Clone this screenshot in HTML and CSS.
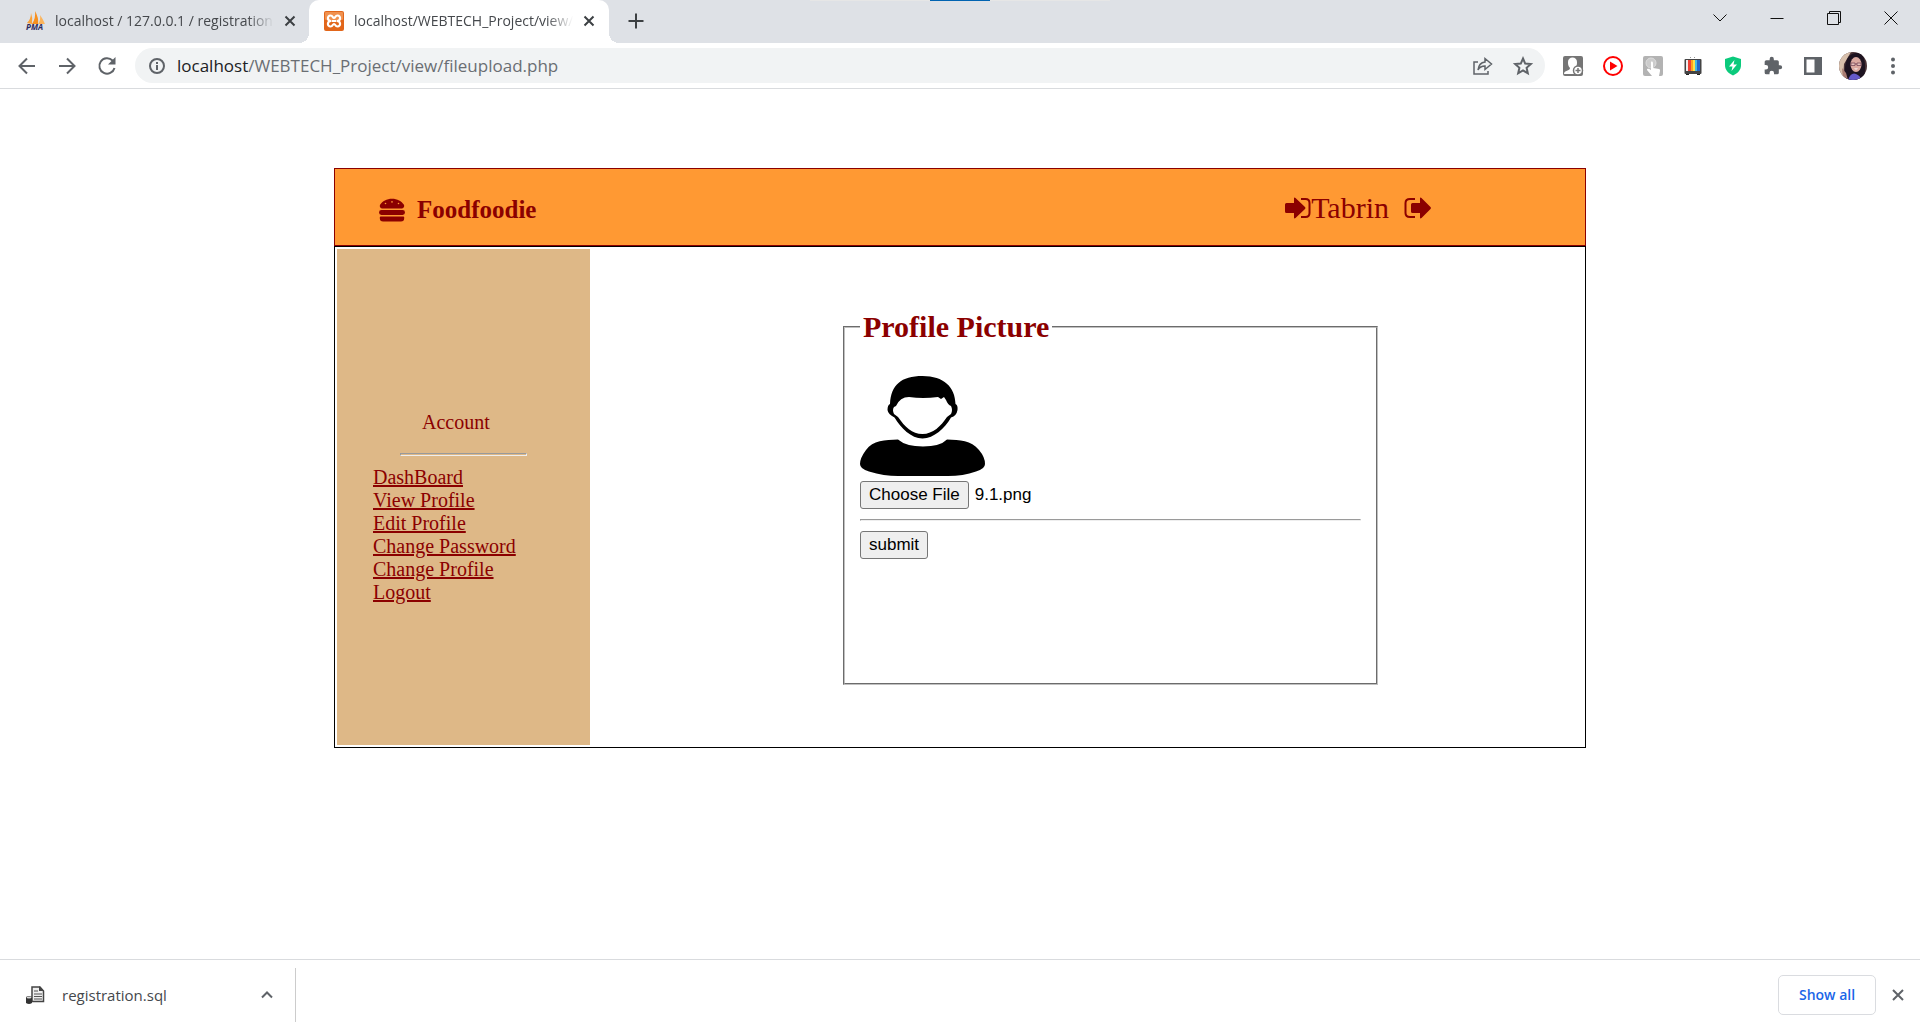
FILE: index.html
```html
<!DOCTYPE html>
<html lang="en">
<head>
<meta charset="utf-8">
<title>Foodfoodie - Profile Picture</title>
<link rel="stylesheet" href="styles.css">
</head>
<body>
<div class="tabstrip">
  <div class="progress"><span class="progress-bar"></span></div>
  <div class="tab">
    <svg class="i20" viewBox="0 0 20 20"><path d="M2 12Q6 8 6 2Q8 7 7 13Z" fill="#f9a13a"/><path d="M7 13Q11 7 10 0Q14 7 13 13Z" fill="#f78f1e"/><path d="M13 13Q16 9 15 4Q18 8 20 13Z" fill="#fbb45c"/><text x="1" y="19" class="pma">PMA</text></svg>
    <span class="tab-title">localhost / 127.0.0.1 / registration</span>
    <button class="icon-btn tab-close" aria-label="Close tab"><svg width="12" height="12" viewBox="0 0 12 12"><path d="M1.500 1.500l9 9M10.500 1.500l-9 9" class="dark"/></svg></button>
  </div>
  <div class="tab tab-active">
    <svg class="i20" viewBox="0 0 20 20"><rect width="20" height="20" rx="2" fill="#e2661a"/><rect x="1" y="1" width="18" height="8" rx="1" fill="#f0914f"/><path d="M7.500 10H12.500M7 10C3 10 3 4.500 6.500 4.500C9 4.500 8.500 7 10 7S11 4.500 13.500 4.500C17 4.500 17 10 13 10C17 10 17 15.500 13.500 15.500C11 15.500 11.500 13 10 13S9 15.500 6.500 15.500C3 15.500 3 10 7 10" fill="none" stroke="#fff" stroke-width="2.200"/></svg>
    <span class="tab-title">localhost/WEBTECH_Project/view/</span>
    <button class="icon-btn tab-close" aria-label="Close tab"><svg width="12" height="12" viewBox="0 0 12 12"><path d="M1.500 1.500l9 9M10.500 1.500l-9 9" class="dark"/></svg></button>
  </div>
  <button class="icon-btn new-tab" aria-label="New tab"><svg width="16" height="16" viewBox="0 0 16 16"><path d="M8 0.500v15M0.500 8h15" class="dark"/></svg></button>
  <div class="window-controls">
    <button class="icon-btn" aria-label="Search tabs"><svg width="14" height="14" viewBox="0 0 14 14"><path d="M0.500 3.500L7 10L13.500 3.500" class="thin"/></svg></button>
    <button class="icon-btn" aria-label="Minimize"><svg width="14" height="14" viewBox="0 0 14 14"><path d="M0.500 7.500h13" class="thin"/></svg></button>
    <button class="icon-btn" aria-label="Restore"><svg width="14" height="14" viewBox="0 0 14 14"><path d="M.5 2.500h11v11h-11zM2.500 2.500v-2h11v11h-2" class="thin"/></svg></button>
    <button class="icon-btn" aria-label="Close"><svg width="14" height="14" viewBox="0 0 14 14"><path d="M.5.500l13 13M13.500.500l-13 13" class="thin"/></svg></button>
  </div>
</div>

<div class="toolbar">
  <div class="nav-buttons">
    <button class="icon-btn" aria-label="Back"><svg width="18" height="18" viewBox="0 0 18 18"><path d="M17 9H2M9 1.500L1.500 9L9 16.500" class="gray"/></svg></button>
    <button class="icon-btn" aria-label="Forward"><svg width="18" height="18" viewBox="0 0 18 18"><path d="M1 9h15M9 1.500L16.500 9L9 16.500" class="gray"/></svg></button>
    <button class="icon-btn" aria-label="Reload"><svg width="18" height="18" viewBox="0 0 18 18"><path d="M16.500 11A7.700 7.700 0 1 1 14.500 3.500L16 5" class="gray"/><path d="M17.500 0v7.500H10z" fill="#5f6368"/></svg></button>
  </div>
  <div class="omnibox">
    <svg width="16" height="16" viewBox="0 0 16 16"><circle cx="8" cy="8" r="7" class="gray"/><path d="M8 7v5M8 4v2" class="gray"/></svg>
    <span class="url"><span class="host">localhost</span>/WEBTECH_Project/view/fileupload.php</span>
    <button class="icon-btn" aria-label="Share"><svg width="20" height="18" viewBox="0 0 20 18"><path d="M5 5H1v12h14v-3" class="line"/><path d="M12 5V1.500l6.500 5.500L12 12.500V9C9 9 6.500 10 5 13C5.500 8.500 8 5.500 12 5z" class="line"/></svg></button>
    <button class="icon-btn" aria-label="Bookmark"><svg width="18" height="18" viewBox="0 0 18 18"><path d="M9 1.500l2.200 5.100 5.600.500-4.200 3.700 1.200 5.500L9 13.400l-4.800 2.900 1.200-5.500L1.200 7.100l5.600-.5z" class="gray"/></svg></button>
  </div>
  <div class="extensions">
    <button class="icon-btn" aria-label="Account extension"><svg class="i20" viewBox="0 0 20 20"><rect width="20" height="20" rx="2" fill="#757575"/><path d="M1 18c0-4 6-3 6-6C5 10 5 8 5 6c0-3 2-4.500 4.500-4.500S14 3 14 6c0 2 0 4-2 6l1 6z" fill="#fff"/><circle cx="15" cy="14.500" r="4.500" fill="#fff" stroke="#757575" stroke-width="1.500"/><path d="M15 12v5M12.500 14.500h5" stroke="#757575" stroke-width="1.500"/></svg></button>
    <button class="icon-btn" aria-label="Video extension"><svg class="i20" viewBox="0 0 20 20"><circle cx="10" cy="10" r="9" fill="#fff" stroke="#f00" stroke-width="2"/><path d="M7 5.500l7.500 4.500L7 14.500z" fill="#f00"/></svg></button>
    <button class="icon-btn" aria-label="Touch extension"><svg class="i20" viewBox="0 0 20 20"><rect width="20" height="20" rx="2" fill="#b3b3b3"/><circle cx="8" cy="7" r="5" fill="#ccc" stroke="#ddd"/><path d="M8 6c1-1 2 0 2 1v5l6 1c1 0 1 1 1 2l-1 5H9L4 14c0-2 2-1 4 0z" fill="#fff"/></svg></button>
    <button class="icon-btn" aria-label="TV extension"><svg class="i20" viewBox="0 0 20 20"><path d="M7 1l1 1M12 1l-1 1" stroke="#999"/><rect x="1.500" y="3" width="17" height="15" rx="1" fill="#444"/><path d="M3 18h3v1H3zM14 18h3v1h-3z" fill="#222"/><path d="M3 4h3v11H3z" fill="#eee"/><path d="M5 4h3v11H5z" fill="#ef4136"/><path d="M8 4h3v11H8z" fill="#ffa41c"/><path d="M10 4h2v11h-2z" fill="#ffe14a"/><path d="M12 4h2v11h-2z" fill="#47b8e0"/><path d="M14 4h3v11h-3z" fill="#2565c7"/></svg></button>
    <button class="icon-btn" aria-label="Shield extension"><svg class="i20" viewBox="0 0 20 20"><path d="M10 .5l8 2.500v6c0 5-3 8-8 10.500C5 17 2 14 2 9V3z" fill="#0bca7c"/><path d="M11.500 4L6 10.500h3.500L8.500 15 14 8.500h-3.500z" fill="#fff"/></svg></button>
    <button class="icon-btn" aria-label="Extensions"><svg class="i20" viewBox="0 0 24 24"><path d="M20.500 11H19V7a2 2 0 0 0-2-2h-4V3.500a2.500 2.500 0 0 0-5 0V5H4a2 2 0 0 0-2 2v3.800h1.500a2.700 2.700 0 0 1 0 5.400H2V20a2 2 0 0 0 2 2h3.800v-1.500a2.700 2.700 0 0 1 5.400 0V22H17a2 2 0 0 0 2-2v-4h1.500a2.500 2.500 0 0 0 0-5z" fill="#5f6368"/></svg></button>
    <button class="icon-btn" aria-label="Side panel"><svg class="i20" viewBox="0 0 20 20"><path d="M1 1h18v18H1zM3.500 3.500v13h8v-13z" fill="#5f6368" fill-rule="evenodd"/></svg></button>
    <button class="icon-btn" aria-label="Profile"><svg width="28" height="28" viewBox="0 0 28 28"><defs><clipPath id="round"><circle cx="14" cy="14" r="14"/></clipPath></defs><g clip-path="url(#round)"><rect width="28" height="28" fill="#4a3336"/><path d="M0 0h12L5 12 4 28H0z" fill="#d8c0ac"/><path d="M6 28C5 12 7 2 17 1s10 12 8 27z" fill="#1d1320"/><ellipse cx="17" cy="12.500" rx="5.500" ry="7.500" fill="#dba9a0"/><path d="M12 11h4v2.500h-4zM18 11h4v2.500h-4zM16 12h2" fill="#e4c1ba" stroke="#784a5c" stroke-width=".8"/><path d="M15 16.500h4q-2 2-4 0" fill="#fff"/><path d="M9 28q3-8 8-6t5 6z" fill="#6559c9"/><path d="M3 16l4 5 2 7H4z" fill="#a97c72"/></g></svg></button>
    <button class="icon-btn" aria-label="Menu"><svg class="i20" viewBox="0 0 20 20" fill="#5f6368"><circle cx="10" cy="3.500" r="2"/><circle cx="10" cy="10" r="2"/><circle cx="10" cy="16.500" r="2"/></svg></button>
  </div>
</div>

<main class="page">
  <header class="site-header">
    <div class="brand">
      <svg width="26" height="26" viewBox="0 0 512 512" fill="currentColor"><path d="M464 256H48a48 48 0 0 0 0 96h416a48 48 0 0 0 0-96zm16 128H32a16 16 0 0 0-16 16v16a64 64 0 0 0 64 64h352a64 64 0 0 0 64-64v-16a16 16 0 0 0-16-16zM58.640 224h394.720c34.570 0 54.620-43.900 34.820-75.880C448 83.200 359.550 32.100 256 32c-103.540.1-192 51.200-232.180 116.110C4 180.090 24.070 224 58.640 224zM384 112a16 16 0 1 1-16 16 16 16 0 0 1 16-16zM256 80a16 16 0 1 1-16 16 16 16 0 0 1 16-16zm-128 32a16 16 0 1 1-16 16 16 16 0 0 1 16-16z"/></svg>
      <span>Foodfoodie</span>
    </div>
    <div class="user">
      <svg width="26" height="30" viewBox="0 0 26 30"><path d="M1.500 10H9V5.500q0-1.500 1.500-.5L20 14q1 1 0 2l-9.500 9Q9 26 9 24.500V20H1.500Q0 20 0 18.500v-7Q0 10 1.500 10z" fill="currentColor"/><path d="M16 6h4.500q4 0 4 4v10q0 4-4 4H16" fill="none" stroke="currentColor" stroke-width="2"/></svg><span>Tabrin</span>
      <svg class="sign-out" width="27" height="30" viewBox="0 0 27 30"><path d="M8.500 10H16V5.500q0-1.500 1.500-.5L26.500 14q1 1 0 2l-9 9Q16 26 16 24.500V20H8.500Q7 20 7 18.500v-7Q7 10 8.500 10z" fill="currentColor"/><path d="M11 6H6Q1.500 6 1.500 10v10q0 4 4.500 4h5" fill="none" stroke="currentColor" stroke-width="2"/></svg>
    </div>
  </header>
  <div class="panel">
    <aside class="sidebar">
      <p class="account">Account</p>
      <hr>
      <nav class="links">
        <a href="#">DashBoard</a>
        <a href="#">View Profile</a>
        <a href="#">Edit Profile</a>
        <a href="#">Change Password</a>
        <a href="#">Change Profile</a>
        <a href="#">Logout</a>
      </nav>
    </aside>
    <section class="content">
      <form class="form">
        <fieldset>
          <legend>Profile Picture</legend>
          <svg class="portrait" width="125" height="100" viewBox="0 0 125 100"><path d="M38 63.500C25 64 13 64 6 74Q0 82 0 88Q0 93 9 95.500Q24 100 38 100H88Q103 100 116 95.500Q125 93 125 88Q125 81 119 74C111 64 100 64 87 63.500Q80 70.500 63 70.500T38 63.500z"/><path d="M30 28C31 9 41 0 62.500 0S95 11 95.500 28Q98 29 97.500 34Q96.500 40 91 41.500C85 52 74 62.500 62.500 62.500S41 52 34.500 41.500Q28 38 27.500 34Q27.500 29 30 28z"/><path d="M36 30Q40 21 49 21Q63 23 78 21L81 23L84 21L86 24Q88 29 91 30Q93 34 91 38L87 41C81 50 73 58 62.500 58S45 51 38 41L34 38Q32 34 34 31z" fill="#fff"/></svg>
          <div class="file-row">
            <label class="btn" for="picture">Choose File<input class="file-input" type="file" id="picture"></label>
            <output for="picture">9.1.png</output>
          </div>
          <hr>
          <button class="btn" type="button">submit</button>
        </fieldset>
      </form>
    </section>
  </div>
</main>

<footer class="shelf">
  <div class="download">
    <svg width="18" height="18" viewBox="0 0 18 18"><path d="M6 1h8l3.500 4v10.500H6z" fill="#eee" stroke="#444" stroke-width="1.500"/><path d="M13 0v5h5z" fill="#444"/><path d="M8 5h4M8 8h8M8 10.500h8M8 13h8" stroke="#555"/><path d="M0 11q3-2 6 0v6q-3 2-6 0z" fill="#333"/><ellipse cx="3" cy="11.500" rx="2.500" ry="1" fill="#ddd"/></svg>
    <span class="filename">registration.sql</span>
    <button class="icon-btn" aria-label="Download options"><svg width="12" height="12" viewBox="0 0 12 12"><path d="M1 8.500l5-5 5 5" class="gray"/></svg></button>
  </div>
  <button class="show-all">Show all</button>
  <button class="icon-btn" aria-label="Close downloads"><svg width="12" height="12" viewBox="0 0 12 12"><path d="M1 1l10 10M11 1L1 11" class="gray"/></svg></button>
</footer>
</body>
</html>
```
FILE: styles.css
```css
* { box-sizing: border-box; }
body {
  margin: 0;
  min-height: 100vh;
  display: flex;
  flex-direction: column;
  background: #fff;
  font-family: "Open Sans", "Noto Sans", sans-serif;
}
svg { display: block; flex: none; overflow: visible; }
.i20 { width: 20px; height: 20px; }
.gray, .line, .dark, .thin { fill: none; stroke: #5f6368; stroke-width: 2; }
.line { stroke-width: 1.5; }
.dark { stroke: #3c4043; }
.thin { stroke: #111; stroke-width: 1; }
.pma { font: italic bold 8px "Open Sans", sans-serif; fill: #2d2a5e; }
.icon-btn {
  border: 0;
  padding: 0;
  background: none;
  display: flex;
  align-items: center;
  justify-content: center;
}

/* Tab strip */
.tabstrip {
  position: relative;
  display: flex;
  height: 43px;
  background: #dee1e6;
}
.progress {
  position: absolute;
  top: 0;
  left: 50%;
  width: 300px;
  height: 1px;
  transform: translateX(-50%);
  background: #e6e6e6;
}
.progress-bar { display: block; width: 60px; height: 1px; margin: 0 auto; background: #0063b1; }
.tab {
  position: relative;
  display: flex;
  align-items: center;
  gap: 10px;
  width: 309px;
  padding: 0 13px 2px 25px;
}
.tab-active {
  width: 300px;
  padding: 0 14px 2px 15px;
  background: #fff;
  border-radius: 10px 10px 0 0;
}
.tab-active::before, .tab-active::after {
  content: "";
  position: absolute;
  bottom: 0;
  width: 10px;
  height: 10px;
}
.tab-active::before { left: -10px; background: radial-gradient(circle at 0 0, transparent 10px, #fff 10px); }
.tab-active::after { right: -10px; background: radial-gradient(circle at 100% 0, transparent 10px, #fff 10px); }
.tab-title {
  flex: 1;
  overflow: hidden;
  white-space: nowrap;
  font-size: 14px;
  line-height: 20px;
  color: #45484c;
  -webkit-mask-image: linear-gradient(to right, #000 88%, transparent);
  mask-image: linear-gradient(to right, #000 88%, transparent);
}
.new-tab { width: 54px; padding-bottom: 2px; }
.window-controls { display: flex; margin-left: auto; height: 36px; padding-right: 1px; }
.window-controls .icon-btn { width: 57px; }

/* Toolbar */
.toolbar {
  display: flex;
  align-items: center;
  height: 46px;
  border-bottom: 1px solid #d9dbde;
}
.nav-buttons { display: flex; padding: 0 8px 0 7px; }
.nav-buttons .icon-btn, .extensions .icon-btn { width: 40px; height: 35px; }
.omnibox {
  flex: 1;
  display: flex;
  align-items: center;
  gap: 12px;
  height: 35px;
  padding: 0 8px 0 14px;
  border-radius: 18px;
  background: #f1f3f4;
}
.omnibox .icon-btn { width: 28px; }
.url { flex: 1; font-size: 17px; line-height: 24px; color: #6a6e73; }
.host { color: #202124; }
.extensions { display: flex; padding: 0 7px 0 8px; }

/* Site */
.page {
  flex: 1;
  width: calc(65% + 4px);
  margin: 0 auto;
  padding: 79px 0;
  font-family: "Liberation Serif", "Times New Roman", serif;
  color: #8b0000;
}
.site-header {
  display: flex;
  align-items: center;
  justify-content: space-between;
  height: 78px;
  padding: 4px 154px 0 44px;
  border: 1px solid #8b0000;
  background: #ff9933;
}
.brand { display: flex; align-items: center; gap: 12px; padding-top: 1px; font-size: 25px; line-height: 28px; font-weight: bold; }
.user { display: flex; align-items: center; padding-bottom: 2px; font-size: 30px; line-height: 34px; }
.sign-out { margin-left: 15px; }
.panel {
  display: grid;
  grid-template-columns: 253px 1fr;
  gap: 2px;
  min-height: 502px;
  padding: 2px;
  border: 1px solid #000;
}
.sidebar { padding: 162px 36px 0; background: #deb887; font-size: 20px; line-height: 23px; }
.account { margin: 0 0 19px; padding-left: 49px; }
.sidebar hr { width: 127px; height: 3px; margin: 0 auto 10px; }
.links { display: flex; flex-direction: column; align-items: flex-start; }
.links a { color: inherit; }
.content { display: flex; align-items: center; justify-content: center; padding-left: 46px; }
.form { width: 535px; }
fieldset {
  min-height: 375px;
  margin: 0;
  padding: 32px 15px 15px;
  border: 2px groove #c0c0c0;
}
legend { padding: 0 3px; font-size: 30px; line-height: 34px; font-weight: bold; }
fieldset hr { margin: 10px 0; }
.file-row { display: flex; align-items: center; gap: 6px; margin-top: 5px; }
.btn, output { font: 17px/24px "Liberation Sans", Arial, sans-serif; color: #000; }
.btn {
  position: relative;
  display: inline-block;
  padding: 1px 8px;
  border: 1px solid #767676;
  border-radius: 3px;
  background: #efefef;
}
.file-input { position: absolute; inset: 0; width: 100%; opacity: 0; }

/* Downloads shelf */
.shelf {
  display: flex;
  align-items: center;
  height: 71px;
  padding: 0 16px 1px 0;
  border-top: 1px solid #d9dbde;
}
.download {
  display: flex;
  align-items: center;
  gap: 18px;
  width: 296px;
  height: 54px;
  padding: 0 22px 0 26px;
  border-right: 1px solid #ccc;
}
.filename { flex: 1; font-size: 15px; line-height: 20px; color: #45484c; }
.show-all {
  width: 98px;
  height: 40px;
  margin: 0 16px 0 auto;
  border: 1px solid #dadce0;
  border-radius: 5px;
  background: #fff;
  color: #1a66e8;
  font: 600 14px/20px "Open Sans", sans-serif;
}
```
